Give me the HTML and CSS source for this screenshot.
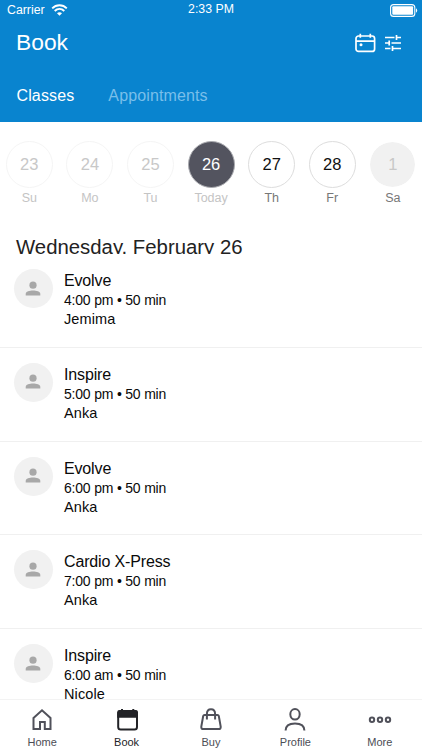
FILE: index.html
```html
<!DOCTYPE html>
<html lang="en">
<head>
<meta charset="utf-8">
<title>Book</title>
<link rel="stylesheet" href="styles.css">
</head>
<body>
<div class="app">
  <header class="header">
    <div class="status">
      <div class="carrier"><span class="carrier-name">Carrier</span>
        <svg class="wifi" width="17" height="12" viewBox="0 0 16 12" fill="none" stroke="#fff" stroke-width="1.9"><path d="M.7 4.3C4.8.2 11.2.2 15.3 4.3M3.2 7c2.8-2.6 6.8-2.6 9.6 0"/><path d="M5.5 9.2C7 7.9 9 7.9 10.5 9.2L8 11.8z" fill="#fff" stroke="none"/></svg>
      </div>
      <span class="clock">2:33 PM</span>
      <svg class="battery" width="28" height="13" viewBox="0 0 28 13"><rect x=".6" y=".6" width="24.2" height="11.8" rx="3" fill="none" stroke="#fff" stroke-width="1.1"/><rect x="2.3" y="2.3" width="20.8" height="8.4" rx="1" fill="#fff"/><path d="M26 4.2q2.400 2.200 0 4.600z" fill="#fff"/></svg>
    </div>
    <div class="titlebar">
      <h1 class="title">Book</h1>
      <div class="actions">
        <svg width="21" height="20" viewBox="0 0 21 20" fill="none" stroke="#fff" stroke-width="1.7"><rect x="1" y="3" width="18.6" height="15.4" rx="2.5"/><path d="M1 8.2h18.6M5.3.8v4M15.3.8v4"/><circle cx="6" cy="11.7" r="1.5" fill="#fff" stroke="none"/></svg>
        <svg width="18" height="18" viewBox="0 0 18 18" fill="none" stroke="#fff" stroke-width="1.7"><path d="M1 3.500h9.500M12.500 1v5M12.500 3.500H17M1 9h4M5.200 6.500v5M7.500 9H17M1 14.500h5.500M8.500 12v5M8.500 14.500H17"/></svg>
      </div>
    </div>
    <nav class="tabs"><span class="tab active">Classes</span><span class="tab">Appointments</span></nav>
  </header>
  <section class="days">
    <div class="day past"><span class="num">23</span><span class="name">Su</span></div>
    <div class="day past"><span class="num">24</span><span class="name">Mo</span></div>
    <div class="day past"><span class="num">25</span><span class="name">Tu</span></div>
    <div class="day today"><span class="num">26</span><span class="name">Today</span></div>
    <div class="day"><span class="num">27</span><span class="name">Th</span></div>
    <div class="day"><span class="num">28</span><span class="name">Fr</span></div>
    <div class="day off"><span class="num">1</span><span class="name">Sa</span></div>
  </section>
  <h2 class="date">Wednesday, February 26</h2>
  <main class="list">
    <article class="item"><div class="avatar"><svg width="16" height="16" viewBox="0 0 16 16"><circle cx="8" cy="4.2" r="3.6"/><path d="M.7 14.6v-1.7C.7 10.5 4.500 9.500 8 9.500s7.300 1 7.300 3.400v1.700z"/></svg></div><div class="info"><h3 class="name-line">Evolve</h3><p class="time">4:00 pm • 50 min</p><p class="coach">Jemima</p></div></article>
    <article class="item"><div class="avatar"><svg width="16" height="16" viewBox="0 0 16 16"><circle cx="8" cy="4.2" r="3.6"/><path d="M.7 14.6v-1.7C.7 10.5 4.500 9.500 8 9.500s7.300 1 7.300 3.400v1.700z"/></svg></div><div class="info"><h3 class="name-line">Inspire</h3><p class="time">5:00 pm • 50 min</p><p class="coach">Anka</p></div></article>
    <article class="item"><div class="avatar"><svg width="16" height="16" viewBox="0 0 16 16"><circle cx="8" cy="4.2" r="3.6"/><path d="M.7 14.6v-1.7C.7 10.5 4.500 9.500 8 9.500s7.300 1 7.300 3.400v1.700z"/></svg></div><div class="info"><h3 class="name-line">Evolve</h3><p class="time">6:00 pm • 50 min</p><p class="coach">Anka</p></div></article>
    <article class="item"><div class="avatar"><svg width="16" height="16" viewBox="0 0 16 16"><circle cx="8" cy="4.2" r="3.6"/><path d="M.7 14.6v-1.7C.7 10.5 4.500 9.500 8 9.500s7.300 1 7.300 3.400v1.700z"/></svg></div><div class="info"><h3 class="name-line">Cardio X-Press</h3><p class="time">7:00 pm • 50 min</p><p class="coach">Anka</p></div></article>
    <article class="item"><div class="avatar"><svg width="16" height="16" viewBox="0 0 16 16"><circle cx="8" cy="4.2" r="3.6"/><path d="M.7 14.6v-1.7C.7 10.5 4.500 9.500 8 9.500s7.300 1 7.300 3.400v1.700z"/></svg></div><div class="info"><h3 class="name-line">Inspire</h3><p class="time">6:00 am • 50 min</p><p class="coach">Nicole</p></div></article>
  </main>
  <footer class="bottom">
    <a class="link"><svg width="24" height="24" viewBox="0 0 24 24"><path d="M3.500 10.900 12 3.300l8.500 7.600V22h-5.700v-7H10v7H3.500z"/></svg><span>Home</span></a>
    <a class="link current"><svg width="24" height="24" viewBox="0 0 24 24"><rect x="3.200" y="4" width="18.800" height="18.400" rx="2.500"/><path d="M3.200 5.400q0-1.400 1.400-1.400h16Q22 4 22 5.400v4.300H3.200z" fill="#222327"/><path d="M7 2v3M18.300 2v3"/></svg><span>Book</span></a>
    <a class="link"><svg width="24" height="24" viewBox="0 0 24 24"><path d="M5.500 8h13q1 0 1.300 1l1.900 10.700q.2 2.400-2 2.400H4.300q-2.200 0-2-2.400L4.200 9q.3-1 1.300-1zM7.900 12.500V7q0-4.700 4.100-4.700T16.100 7v5.500"/></svg><span>Buy</span></a>
    <a class="link"><svg width="24" height="24" viewBox="0 0 24 24"><ellipse cx="12" cy="7.300" rx="4.700" ry="5.200"/><path d="M2.600 23.500c0-5 3-7.100 9.400-7.100s9.400 2.100 9.400 7.100"/></svg><span>Profile</span></a>
    <a class="link"><svg width="24" height="24" viewBox="0 0 24 24"><circle cx="4" cy="12.700" r="2.200"/><circle cx="12" cy="12.700" r="2.200"/><circle cx="20" cy="12.700" r="2.200"/></svg><span>More</span></a>
  </footer>
</div>
</body>
</html>
```
FILE: styles.css
```css
* { box-sizing: border-box; }
body, h1, h2, h3, p { margin: 0; font-weight: 400; }
body { font-family: "Liberation Sans", Arial, sans-serif; background: #fff; color: #0a0a0a; }
svg { display: block; flex: none; }
.app { height: 750px; display: flex; flex-direction: column; overflow: hidden; }
.header { height: 122px; flex: none; background: #0984cf; color: #fff; }
.status { height: 20px; padding: 0 4px 0 7px; display: grid; grid-template-columns: 1fr auto 1fr; align-items: center; font-size: 12.3px; line-height: 20px; }
.carrier { display: flex; align-items: center; gap: 6px; }
.clock { margin-left: -3px; line-height: 18px; margin-top: -2px; }
.battery { justify-self: end; }
.titlebar { height: 46px; padding: 0 20px 0 16px; display: flex; align-items: center; justify-content: space-between; }
.title { font-size: 22.8px; line-height: 44px; margin-top: -2px; }
.actions { display: flex; align-items: center; gap: 8px; }
.tabs { display: flex; gap: 34px; padding: 20px 0 0 16.5px; font-size: 16px; line-height: 20px; letter-spacing: .13px; }
.tab { color: #79bfea; }
.tab.active { color: #fff; }
.days { flex: none; height: 112px; padding: 19px 0 0; display: grid; grid-template-columns: repeat(7, 60.600px); margin-left: -1px; }
.day { display: flex; flex-direction: column; align-items: center; }
.num { width: 47px; height: 47px; border: 1px solid #ddd; border-radius: 50%; font-size: 16.500px; line-height: 45px; text-align: center; color: #111; }
.name { font-size: 12.5px; line-height: 16px; margin-top: 2px; color: #777; }
.past .num { color: #c8c8c8; border-color: #f5f5f5; }
.past .name, .today .name { color: #c4c4c4; }
.today .num { color: #fff; background: #53545f; border-color: #a9aaaf; }
.off .num { color: #c8c8c8; background: #f1f1f1; border-color: #fff; background-clip: padding-box; }
.date { flex: none; height: 20px; padding-left: 16px; overflow: hidden; font-size: 20.350px; line-height: 26px; color: #222; }
.list { flex: 1; min-height: 0; overflow: hidden; }
.item { height: 93.750px; border-bottom: 1px solid #f0f0f0; padding: 15px 14px 0 13.5px; display: flex; gap: 11.5px; }
.avatar { width: 39px; height: 39px; border-radius: 50%; background: #f1f1f1; display: flex; align-items: center; justify-content: center; }
.avatar svg { fill: #a8a8a8; }
.info { padding-top: 2px; }
.name-line { font-size: 16px; line-height: 20px; letter-spacing: -.15px; }
.time { font-size: 14px; line-height: 18px; letter-spacing: -.2px; }
.coach { font-size: 14.500px; line-height: 20px; letter-spacing: .1px; }
.bottom { flex: none; height: 51px; border-top: 1px solid #f3f3f3; background: #fff; display: grid; grid-template-columns: repeat(5, 1fr); }
.link { display: flex; flex-direction: column; align-items: center; padding-top: 7px; gap: 4px; font-size: 11px; line-height: 14px; color: #4c4d55; }
.link svg { fill: none; stroke: #50515a; stroke-width: 2; }
.current { color: #222327; }
.current svg { stroke: #222327; }
```
